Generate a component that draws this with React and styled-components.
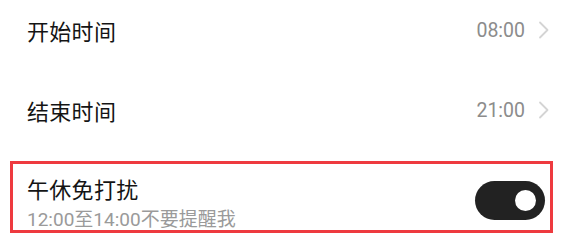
import React, { useState } from "react";
import styled, { createGlobalStyle } from "styled-components";

const GlobalStyle = createGlobalStyle`
  html, body {
    margin: 0;
    padding: 0;
    background: #ffffff;
  }
  body {
    font-family: "Noto Sans CJK SC", "Noto Sans", sans-serif;
    -webkit-font-smoothing: antialiased;
  }
`;

const rows = [
  { id: "start", title: "开始时间", value: "08:00" },
  { id: "end", title: "结束时间", value: "21:00" },
];

const App = () => {
  const [noonOn, setNoonOn] = useState(true);

  return (
    <>
      <GlobalStyle />
      <SettingsList>
        {rows.map((row) => (
          <Row key={row.id}>
            <Title>{row.title}</Title>
            <ValueWrap>
              <Value>{row.value}</Value>
              <Chevron viewBox="0 0 12 18" aria-hidden="true">
                <path d="M2 1.5 L9.5 9 L2 16.5" />
              </Chevron>
            </ValueWrap>
          </Row>
        ))}
        <HighlightRow>
          <TextStack>
            <Title>午休免打扰</Title>
            <Sub>12:00至14:00不要提醒我</Sub>
          </TextStack>
          <Toggle
            type="button"
            on={noonOn ? 1 : 0}
            onClick={() => setNoonOn(!noonOn)}
            aria-pressed={noonOn}
          >
            <Knob />
          </Toggle>
        </HighlightRow>
      </SettingsList>
    </>
  );
};

export default App;

const SettingsList = styled.div`
    display: flex;
    flex-direction: column;
    width: 543px;
    margin-left: 10px;
  `,
  Row = styled.div`
    display: flex;
    align-items: center;
    justify-content: space-between;
    box-sizing: border-box;
    height: 60px;
    margin-bottom: 20px;
    padding: 0 3px 0 17px;
  `,
  HighlightRow = styled.div`
    display: flex;
    align-items: center;
    justify-content: space-between;
    box-sizing: border-box;
    height: 72px;
    margin-top: 1px;
    padding: 0 5px 0 14px;
    border: 3px solid #ee3a3f;
  `,
  TextStack = styled.div`
    display: flex;
    flex-direction: column;
    gap: 7px;
    margin-top: 10px;
  `,
  Title = styled.div`
    font-size: 22px;
    line-height: 28px;
    color: #141414;
    letter-spacing: 0.3px;
  `,
  Sub = styled.div`
    font-family: "Roboto", "Noto Sans CJK SC", sans-serif;
    font-size: 19px;
    line-height: 22px;
    color: #9a9a9a;
  `,
  ValueWrap = styled.div`
    display: flex;
    align-items: center;
    gap: 13px;
  `,
  Value = styled.div`
    font-family: "Roboto", "Noto Sans", sans-serif;
    font-size: 19.5px;
    color: #8c8c8c;
  `,
  Chevron = styled.svg`
    width: 12px;
    height: 18px;
    fill: none;
    stroke: #d4d4d4;
    stroke-width: 1.8;
    stroke-linecap: round;
    stroke-linejoin: round;
  `,
  Toggle = styled.button`
    display: flex;
    align-items: center;
    justify-content: ${(p) => (p.on ? "flex-end" : "flex-start")};
    width: 70px;
    height: 39px;
    padding: 0 9px;
    margin-top: 6px;
    border: none;
    border-radius: 20px;
    background: ${(p) => (p.on ? "#222222" : "#d9d9d9")};
    cursor: pointer;
  `,
  Knob = styled.span`
    display: block;
    width: 21px;
    height: 21px;
    border-radius: 50%;
    background: #ffffff;
  `;
